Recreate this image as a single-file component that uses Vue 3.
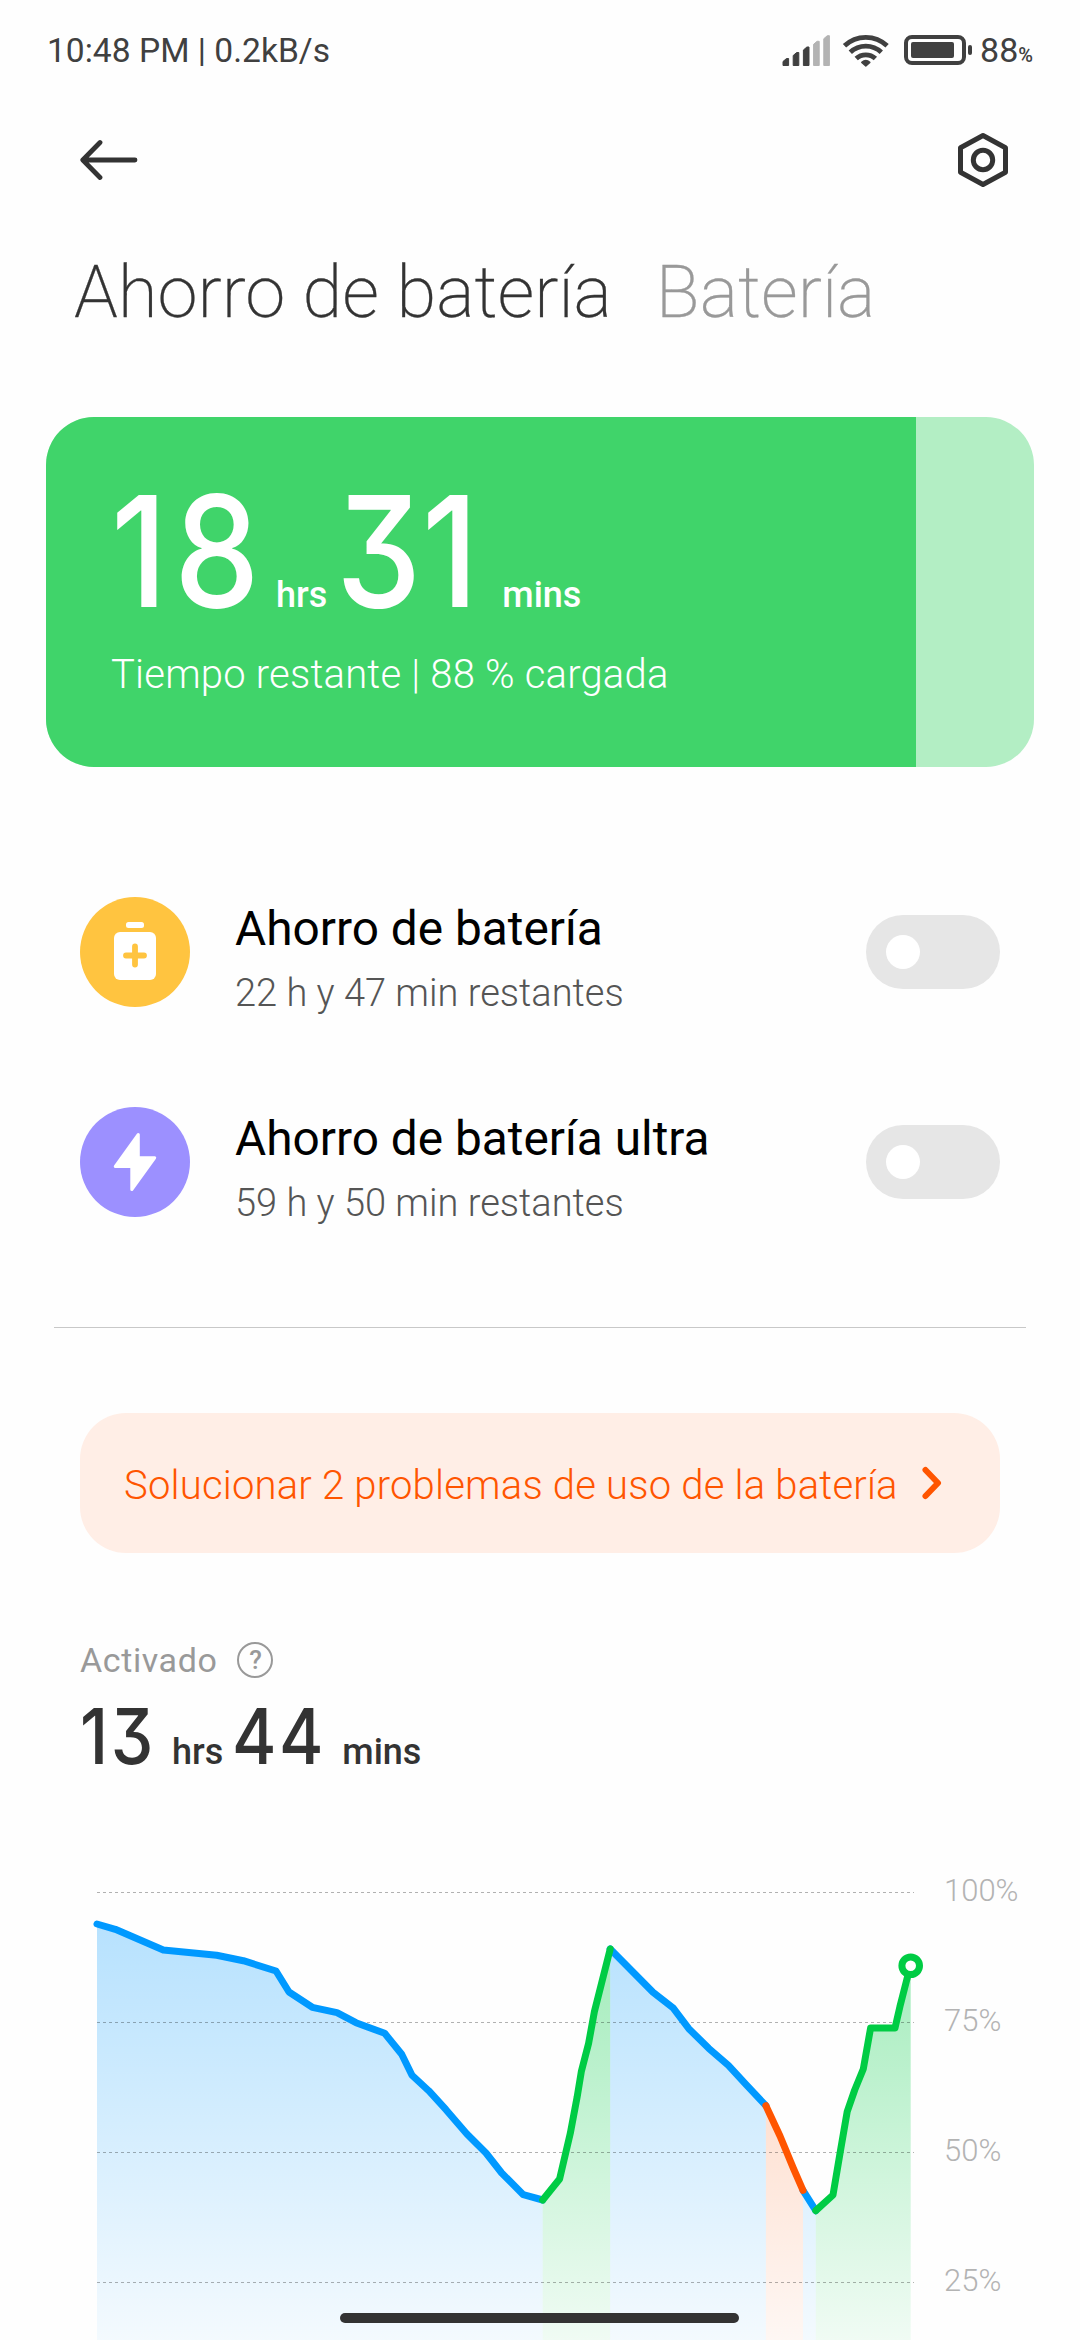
<template>
  <main class="screen">
    <!-- Barra de estado -->
    <header class="status">
      <span class="clock">10:48 PM | 0.2kB/s</span>
      <svg class="status-icons" width="192" height="36" viewBox="780 31 192 36">
        <path v-for="bar in signalBars" :key="bar.d" :d="bar.d" :fill="bar.on ? '#404040' : '#b3b3b3'" :stroke="bar.on ? '#404040' : '#b3b3b3'" stroke-linejoin="round" />
        <g fill="none" stroke="#404040" stroke-width="4.8">
          <path d="M843.5 44.8a31 31 0 0 1 42.6 0" />
          <path d="M849.3 51.3a22.5 22.5 0 0 1 31 0" />
          <path d="M855.2 57.6a14 14 0 0 1 19.2 0" />
        </g>
        <path d="M864.8 65l-4-3.600q4-3.600 8 0z" fill="#404040" stroke="#404040" stroke-width="1.500" stroke-linejoin="round" />
        <rect x="905" y="36" width="58" height="26" rx="6" fill="none" stroke="#404040" stroke-width="4" />
        <rect x="910" y="41" width="43" height="16" rx="2" fill="#404040" />
        <rect x="967" y="44" width="4" height="10" rx="2" fill="#404040" />
      </svg>
      <span class="charge">88<small>%</small></span>
    </header>

    <!-- Barra de navegación -->
    <nav class="toolbar">
      <svg width="58" height="42" viewBox="0 0 58 42" fill="none" stroke="#333" stroke-width="4.8" stroke-linecap="round" stroke-linejoin="round">
        <path d="M3 21h52M20 3.5L2.8 21L20 38.500" />
      </svg>
      <svg width="52" height="56" viewBox="0 0 52 56" fill="none" stroke="#333" stroke-width="5" stroke-linejoin="round">
        <path d="M26 3.500L48.500 15.800V40.200L26 52.500L3.500 40.200V15.800z" />
        <circle cx="26" cy="28" r="9.700" />
      </svg>
    </nav>

    <div class="tabs">
      <h1>Ahorro de batería</h1>
      <h1 class="inactive">Batería</h1>
    </div>

    <!-- Tarjeta con el tiempo restante -->
    <section class="battery-card">
      <div class="battery-fill">
        <p class="time big">
          <span class="digits d18">18</span><span class="unit">hrs</span><span class="digits d31">31</span><span class="unit">mins</span>
        </p>
        <p class="remaining">Tiempo restante | 88 % cargada</p>
      </div>
    </section>

    <!-- Modos de ahorro -->
    <section class="modes">
      <article v-for="mode in modes" :key="mode.title" class="mode">
        <svg class="mode-icon" width="110" height="110" viewBox="0 0 110 110">
          <circle cx="55" cy="55" r="55" :fill="mode.color" />
          <g v-if="mode.icon === 'battery'">
            <rect x="46" y="25" width="18" height="6" rx="2.500" fill="#fff" />
            <rect x="34" y="35" width="42" height="48" rx="6" fill="#fff" />
            <path d="M55 49.500v18M46 58.500h18" :stroke="mode.color" stroke-width="5.800" stroke-linecap="round" />
          </g>
          <path v-else d="M58.300 27.500L35.300 59.500H51.800V82.500L74.700 50.800H58.300z" fill="#fff" stroke="#fff" stroke-width="3" stroke-linejoin="round" />
        </svg>
        <div class="mode-text">
          <h2>{{ mode.title }}</h2>
          <p>{{ mode.left }}</p>
        </div>
        <button class="switch" type="button" :aria-label="mode.title"><span></span></button>
      </article>
    </section>

    <hr class="divider" />

    <button class="fix" type="button">
      <span>Solucionar 2 problemas de uso de la batería</span>
      <svg width="24" height="36" viewBox="0 0 24 36" fill="none" stroke="#ff5500" stroke-width="6" stroke-linecap="round" stroke-linejoin="round">
        <path d="M5.500 5L18 18L5.500 31" />
      </svg>
    </button>

    <section class="usage">
      <p class="usage-label">
        <span>Activado</span>
        <span class="help">?</span>
      </p>
      <p class="time small">
        <span class="digits d13">13</span><span class="unit">hrs</span><span class="digits d44">44</span><span class="unit">mins</span>
      </p>
    </section>

    <!-- Gráfica de nivel de batería -->
    <svg class="chart" width="1080" height="480" viewBox="0 1860 1080 480">
      <defs>
        <linearGradient v-for="(c, name) in colors" :id="name" :key="name" gradientUnits="userSpaceOnUse" x1="0" y1="1892" x2="0" y2="2412">
          <stop offset="0" :stop-color="c.line" :stop-opacity="c.alpha" />
          <stop offset="1" :stop-color="c.line" stop-opacity="0" />
        </linearGradient>
      </defs>
      <path v-for="(s, i) in segments" :key="'a' + i" :d="area(s.points)" :fill="`url(#${s.type})`" />
      <line v-for="g in grid" :key="g.y" x1="97" x2="914" :y1="g.y + 0.5" :y2="g.y + 0.5" class="grid-line" />
      <polyline v-for="(s, i) in segments" :key="'l' + i" :points="s.points" :stroke="colors[s.type].line" class="level" />
      <circle cx="910.700" cy="1965.700" r="8.800" fill="#fff" stroke="#00cc44" stroke-width="7" />
      <text v-for="g in grid" :key="g.label" x="944" :y="g.y + 9" class="grid-label">{{ g.label }}</text>
    </svg>

    <div class="home-bar"></div>
  </main>
</template>

<script setup>
// Barras de señal, de menor a mayor
const signalBars = [57.5, 51.5, 46, 40.3, 34.7].map((top, i) => {
  const x = 782 + i * 10.2
  return {
    d: `M${x} ${top + 3}L${x + 3.5} ${top}H${x + 5.6}V64.500H${x}z`,
    on: i < 3
  }
})

const modes = [
  { title: 'Ahorro de batería', left: '22 h y 47 min restantes', color: '#ffc440', icon: 'battery' },
  { title: 'Ahorro de batería ultra', left: '59 h y 50 min restantes', color: '#9c90ff', icon: 'bolt' }
]

const grid = [
  { y: 1892, label: '100%' },
  { y: 2022, label: '75%' },
  { y: 2152, label: '50%' },
  { y: 2282, label: '25%' }
]

const colors = {
  use: { line: '#0099ff', alpha: 0.3 },
  charge: { line: '#00cc44', alpha: 0.4 },
  heavy: { line: '#ff5500', alpha: 0.3 }
}

// Tramos de la curva: uso normal, carga y consumo alto
const segments = [
  { type: 'use', points: '97,1924 115.3,1929.3 163.3,1950 216.7,1955.3 243.3,1960.7 276,1971 289,1992 312.3,2007.3 337,2012.7 356,2022.7 384.7,2033.3 401.7,2054.3 412,2075.3 428.7,2090.7 446,2109.7 466.7,2133.7 486,2153 501.7,2173 523.3,2194.7 542.7,2200' },
  { type: 'use', points: '610.2,1949 653,1992.3 672.9,2007.7 688.8,2028.7 708.7,2048.3 728.4,2065.3 746.6,2085 765.9,2105.7' },
  { type: 'use', points: '803,2190.3 815.8,2210.7' },
  { type: 'heavy', points: '765.9,2105.7 780,2136 793.4,2168.3 803,2190.3' },
  { type: 'charge', points: '542.7,2200 559.6,2179 570.3,2133.3 577.2,2096.7 581.3,2071.7 588.6,2043.3 594.4,2011.7 610.2,1949' },
  { type: 'charge', points: '815.8,2210.7 833,2195 840.3,2151.7 847.2,2111.7 854.7,2090 863.3,2069 870.6,2028 895,2028 899.9,2006.7 906.7,1980 910.7,1965.7' }
]

// Cierra un tramo por abajo para poder rellenarlo
function area(points) {
  const list = points.split(' ')
  const first = list[0].split(',')[0]
  const last = list[list.length - 1].split(',')[0]
  return `M${first} 2412L${list.join('L')}L${last} 2412z`
}
</script>

<style>
body {
  background: #fefefe;
}
</style>

<style scoped>
.screen {
  width: 1080px;
  height: 2340px;
  overflow: hidden;
  position: relative;
  background: #fefefe;
  font-family: Roboto, sans-serif;
  color: #333;
  display: flex;
  flex-direction: column;
}

.screen > * {
  flex: none;
}

h1, h2, p {
  margin: 0;
  font-weight: 400;
}

button {
  border: 0;
  padding: 0;
  font: inherit;
}

.status {
  height: 100px;
  padding: 0 47px 0 47px;
  display: flex;
  align-items: center;
  color: #404040;
  font-size: 34px;
  box-sizing: border-box;
}

.clock {
  flex: 1;
  font-size: 33.6px;
}

.status-icons {
  margin-right: 7px;
}

.charge small {
  font-size: 20px;
  font-weight: 500;
}

.toolbar {
  height: 120px;
  padding: 0 71px 2px 80px;
  display: flex;
  align-items: center;
  justify-content: space-between;
}

.tabs {
  display: flex;
  gap: 44px;
  height: 195px;
  padding: 29px 0 0 74px;
  box-sizing: border-box;
}

.tabs h1 {
  font-size: 72.2px;
  line-height: 84px;
  font-weight: 200;
  white-space: nowrap;
  -webkit-text-stroke: .3px currentColor;
}

.tabs .inactive {
  color: #999;
}

.battery-card {
  height: 350px;
  margin: 0 46px;
  border-radius: 48px;
  overflow: hidden;
  background: #b3eec4;
}

.battery-fill {
  width: 870px;
  height: 350px;
  padding: 63px 0 0 65px;
  box-sizing: border-box;
  background: #40d46a;
  color: #fff;
}

.time {
  display: flex;
  align-items: baseline;
  white-space: nowrap;
}

.digits {
  display: inline-block;
  font-family: Inter, sans-serif;
  font-feature-settings: 'cv09';
  transform: scaleX(.88);
  transform-origin: left;
}

.unit {
  font-weight: 500;
  font-size: 36px;
}

.big {
  height: 172px;
  line-height: 142px;
}

.big .digits {
  font-size: 154px;
  font-weight: 480;
}

.d18 { width: 165px; letter-spacing: 8px; }
.d31 { width: 166px; margin-left: 9px; letter-spacing: 1px; }

.remaining {
  font-size: 40px;
  line-height: 46px;
  font-weight: 300;
  letter-spacing: .2px;
}

.modes {
  padding-top: 80px;
}

.mode {
  height: 210px;
  padding: 0 80px;
  display: flex;
  align-items: center;
}

.mode-text {
  flex: 1;
  padding: 18px 0 0 45px;
}

.mode-text h2 {
  font-size: 47.8px;
  line-height: 64px;
  color: #000;
}

.mode-text p {
  font-size: 38px;
  line-height: 64px;
  font-weight: 300;
  color: #555;
}

.switch {
  width: 134px;
  height: 74px;
  padding: 0 20px;
  border-radius: 37px;
  background: #e6e6e6;
}

.switch span {
  display: block;
  width: 34px;
  height: 34px;
  border-radius: 50%;
  background: #fff;
}

.divider {
  width: 972px;
  height: 1px;
  margin: 60px auto 85px;
  border: 0;
  background: #c8c8c8;
}

.fix {
  height: 140px;
  margin: 0 80px;
  padding: 0 56px 0 44px;
  border-radius: 46px;
  background: #ffeee6;
  color: #ff5500;
  font-size: 40px;
  font-weight: 300;
  letter-spacing: .2px;
  display: flex;
  align-items: center;
  justify-content: space-between;
}

.fix span {
  padding-top: 5px;
}

.usage {
  height: 307px;
  box-sizing: border-box;
  padding: 84px 80px 0;
}

.usage-label {
  display: flex;
  align-items: center;
  gap: 20px;
  height: 46px;
  font-size: 34px;
  letter-spacing: .6px;
  color: #999;
}

.help {
  width: 36px;
  height: 36px;
  box-sizing: border-box;
  border: 2.5px solid #999;
  border-radius: 50%;
  font-size: 26px;
  font-weight: 500;
  line-height: 32px;
  letter-spacing: 0;
  text-align: center;
}

.small {
  height: 90px;
  padding-top: 8px;
  line-height: 90px;
}

.small .digits {
  font-size: 77px;
  font-weight: 480;
}

.d13 { width: 92px; letter-spacing: 3px; }
.d44 { width: 110px; margin-left: 9px; letter-spacing: 3px; }

.chart {
  display: block;
}

.grid-line {
  stroke: #000;
  stroke-opacity: .3;
  stroke-dasharray: 3 3;
}

.grid-label {
  font-size: 31px;
  font-weight: 300;
  fill: #b3b3b3;
}

.level {
  fill: none;
  stroke-width: 7px;
  stroke-linecap: round;
  stroke-linejoin: round;
}

/* Indicador de gestos, encima de la gráfica */
.home-bar {
  position: absolute;
  left: 340px;
  bottom: 17px;
  width: 399px;
  height: 10px;
  border-radius: 5px;
  background: #333;
}
</style>
